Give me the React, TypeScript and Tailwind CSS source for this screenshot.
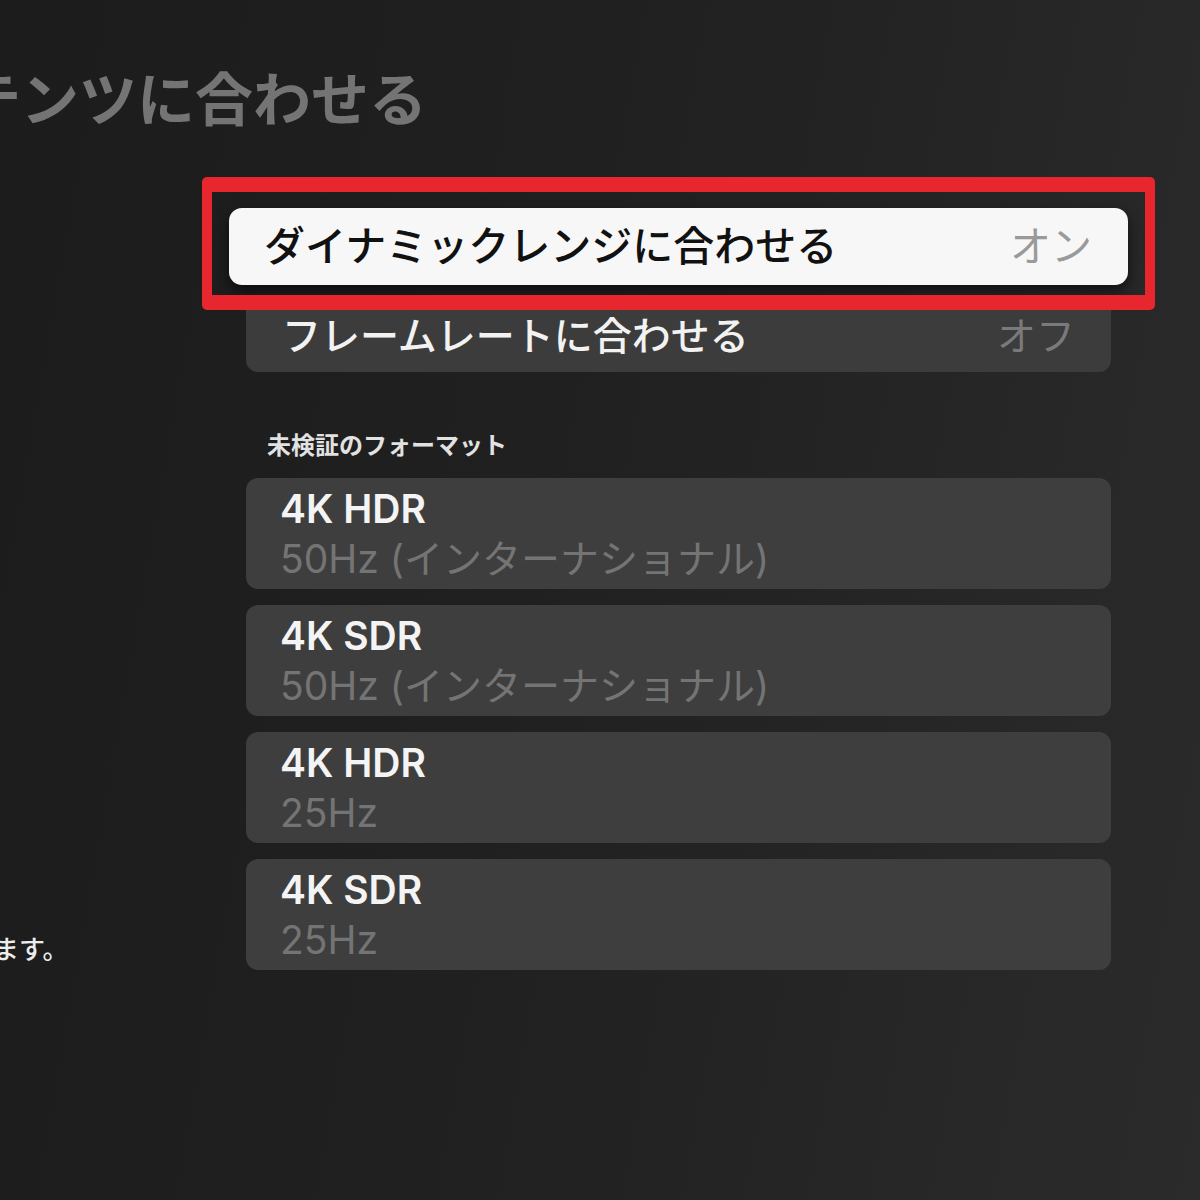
const formats = [
  { title: '4K HDR', rate: '50Hz (インターナショナル)' },
  { title: '4K SDR', rate: '50Hz (インターナショナル)' },
  { title: '4K HDR', rate: '25Hz' },
  { title: '4K SDR', rate: '25Hz' },
]

export default function App() {
  return (
    <div
      className="h-[1200px] w-[1200px] overflow-hidden bg-[linear-gradient(100deg,#1c1c1c_0%,#202020_45%,#2b2b2b_100%)]"
      style={{ fontFamily: 'Inter, "Noto Sans CJK JP", sans-serif' }}
    >
      <h1 className="ml-[-153px] whitespace-nowrap pt-[71px] text-[58px] font-semibold leading-none text-[#747474]">
        コンテンツに合わせる
      </h1>

      <div className="flex">
        {/* left column */}
        <div className="flex w-[246px] shrink-0 flex-col justify-end pb-[7px]">
          <p className="ml-[-33px] whitespace-nowrap text-[26px] font-medium leading-none text-[#ececec]">
            します。
          </p>
        </div>

        {/* settings list */}
        <div className="w-[865px] pt-[79px]">
          <div className="relative">
            <div className="mx-[-17px] flex h-[77px] items-center justify-between rounded-[13px] bg-[#f7f7f7] pl-[35px] pr-[36px] shadow-[0_6px_14px_rgba(0,0,0,0.6)]">
              <span className="text-[41px] font-medium leading-none text-[#111]">
                ダイナミックレンジに合わせる
              </span>
              <span className="text-[41px] leading-none text-[#9a9a9a]">オン</span>
            </div>
            <div className="pointer-events-none absolute bottom-[-25px] left-[-44px] right-[-44px] top-[-31px] rounded-[5px] border-x-[10px] border-y-[15px] border-[#e8262d]" />
          </div>

          <div className="mt-[13px] flex h-[74px] items-center justify-between rounded-[12px] bg-[#3c3c3c] pl-[36px] pr-[36px]">
            <span className="text-[39px] font-medium leading-none text-[#f2f2f2]">
              フレームレートに合わせる
            </span>
            <span className="text-[39px] leading-none text-[#7a7a7a]">オフ</span>
          </div>

          <h2 className="mt-[62px] pl-[21px] text-[24px] font-semibold leading-none text-[#e2e2e2]">
            未検証のフォーマット
          </h2>

          <div className="mt-[20px] flex flex-col gap-4">
            {formats.map((f, i) => (
              <div
                key={i}
                className="flex h-[111px] flex-col justify-center rounded-[12px] bg-[#3e3e3e] pl-[34px]"
              >
                <span className="text-[39px] font-semibold leading-[50px] text-[#f4f4f4]">
                  {f.title}
                </span>
                <span className="text-[39px] leading-[50px] text-[#747474]">{f.rate}</span>
              </div>
            ))}
          </div>
        </div>
      </div>
    </div>
  )
}
